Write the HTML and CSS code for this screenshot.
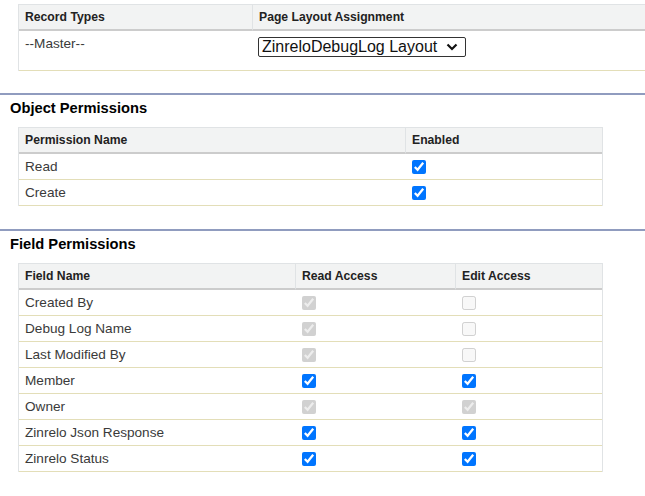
FILE: index.html
```html
<!DOCTYPE html>
<html>
<head>
<meta charset="utf-8">
<link rel="stylesheet" href="styles.css">
</head>
<body>
<div class="page">
  <table class="grid grid-wide">
    <colgroup><col class="c-rt"><col></colgroup>
    <tr><th>Record Types</th><th class="div">Page Layout Assignment</th></tr>
    <tr class="tall">
      <td>--Master--</td>
      <td>
        <span class="select"><span class="select-text">ZinreloDebugLog Layout</span><svg class="chev" width="12" height="8" viewBox="0 0 12 8"><path d="M1.5 1.5 L6 6 L10.5 1.5" fill="none" stroke="#111" stroke-width="2.2"/></svg></span>
      </td>
    </tr>
  </table>

  <div class="section">
    <h3 class="title">Object Permissions</h3>
    <table class="grid">
      <colgroup><col class="c-pn"><col></colgroup>
      <tr><th>Permission Name</th><th class="div">Enabled</th></tr>
      <tr><td>Read</td><td><input type="checkbox" checked></td></tr>
      <tr><td>Create</td><td><input type="checkbox" checked></td></tr>
    </table>
  </div>

  <div class="section">
    <h3 class="title">Field Permissions</h3>
    <table class="grid">
      <colgroup><col class="c-fn"><col class="c-ra"><col></colgroup>
      <tr><th>Field Name</th><th class="div">Read Access</th><th class="div">Edit Access</th></tr>
      <tr><td>Created By</td><td><input type="checkbox" checked disabled></td><td><input type="checkbox" disabled></td></tr>
      <tr><td>Debug Log Name</td><td><input type="checkbox" checked disabled></td><td><input type="checkbox" disabled></td></tr>
      <tr><td>Last Modified By</td><td><input type="checkbox" checked disabled></td><td><input type="checkbox" disabled></td></tr>
      <tr><td>Member</td><td><input type="checkbox" checked></td><td><input type="checkbox" checked></td></tr>
      <tr><td>Owner</td><td><input type="checkbox" checked disabled></td><td><input type="checkbox" checked disabled></td></tr>
      <tr><td>Zinrelo Json Response</td><td><input type="checkbox" checked></td><td><input type="checkbox" checked></td></tr>
      <tr><td>Zinrelo Status</td><td><input type="checkbox" checked></td><td><input type="checkbox" checked></td></tr>
    </table>
  </div>
</div>
</body>
</html>
```
FILE: styles.css
```css
html, body {
  margin: 0;
  padding: 0;
  background: #fff;
  overflow: hidden;
}
body {
  font-family: "Liberation Sans", Arial, sans-serif;
  color: #333;
}
.page {
  padding-top: 4px;
  width: 645px;
  overflow: hidden;
}
.grid {
  border-collapse: separate;
  border-spacing: 0;
  margin-left: 18px;
  width: 585px;
  border-top: 1px solid #e0e3e5;
  border-left: 1px solid #e0e3e5;
  border-right: 1px solid #e0e3e5;
  table-layout: fixed;
}
.grid-wide {
  width: 660px;
}
.c-rt { width: 233px; }
.c-pn { width: 386px; }
.c-fn { width: 276px; }
.c-ra { width: 160px; }
.grid th {
  background: #f2f3f3;
  height: 24px;
  padding: 0 6px;
  text-align: left;
  font-size: 12.2px;
  font-weight: bold;
  color: #222;
  border-bottom: 2px solid #cccccc;
  vertical-align: middle;
  white-space: nowrap;
}
.grid th.div {
  border-left: 1px solid #e0e3e5;
}
.grid td {
  height: 25px;
  padding: 0 6px;
  font-size: 13.6px;
  color: #3a3a3a;
  border-bottom: 1px solid #e3deb8;
  vertical-align: middle;
}
.grid td + td {
  padding-left: 7px;
}
.grid tr.tall td {
  height: 40px;
  vertical-align: top;
  padding-top: 5px;
  box-sizing: border-box;
}
.grid tr.tall td + td {
  padding-top: 6px;
}
.select {
  display: inline-flex;
  align-items: center;
  box-sizing: border-box;
  width: 208px;
  height: 20px;
  border: 1px solid #333;
  border-radius: 2px;
  padding: 0 7px 0 3px;
  font-size: 16px;
  color: #111;
  justify-content: space-between;
  margin-left: -1px;
}
.select-text {
  white-space: nowrap;
  line-height: 18px;
}
.chev {
  display: block;
}
.section {
  border-top: 2px solid #909cbf;
  margin-top: 22px;
}
.section + .section {
  margin-top: 23px;
}
.title {
  margin: 5px 0 11px 10px;
  font-size: 14.7px;
  line-height: 16px;
  font-weight: bold;
  color: #000;
}
input[type="checkbox"] {
  margin: 0;
  width: 14px;
  height: 14px;
  display: block;
}
```
